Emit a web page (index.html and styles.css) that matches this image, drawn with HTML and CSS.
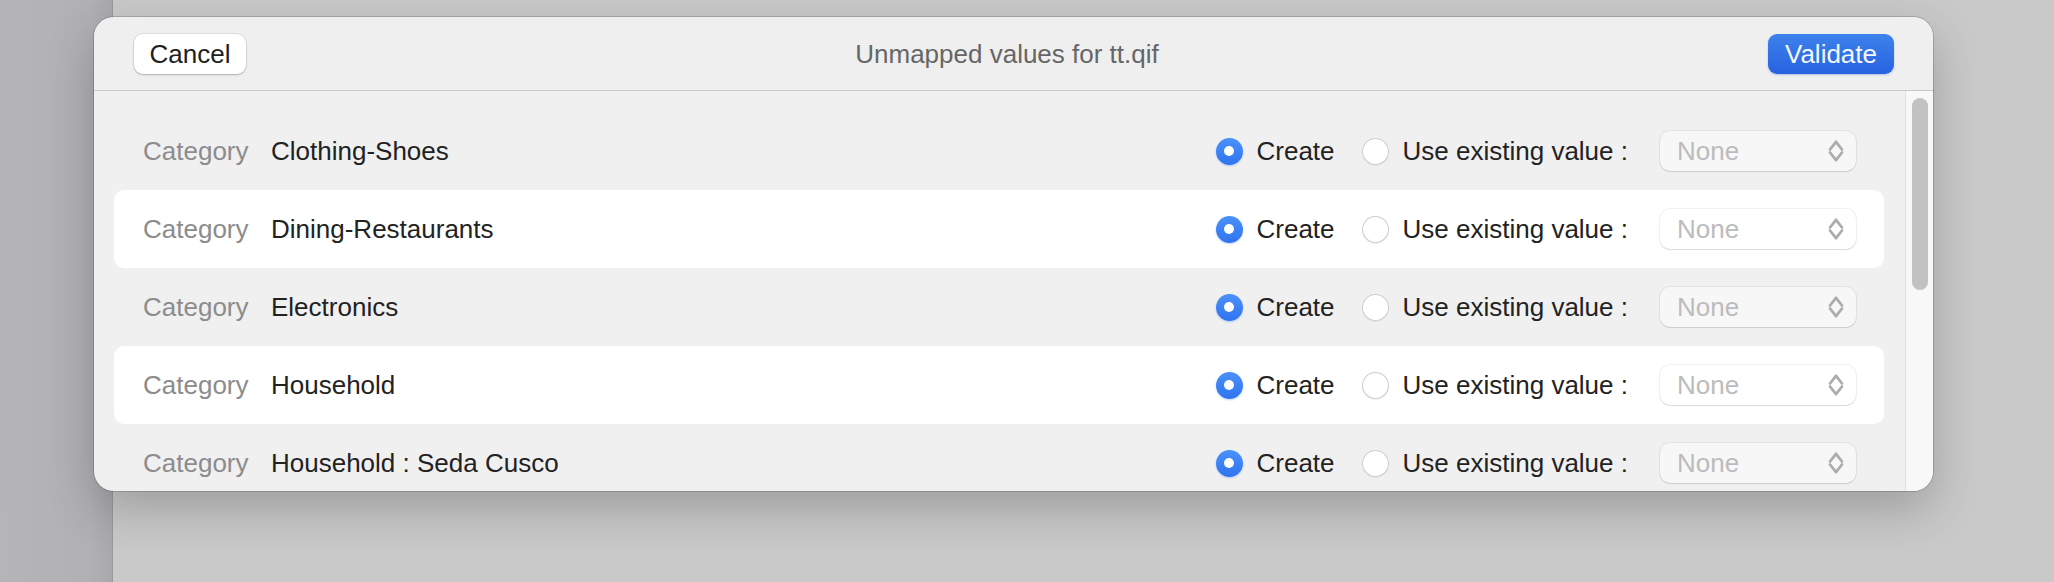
FILE: index.html
```html
<!DOCTYPE html>
<html>
<head>
<meta charset="utf-8">
<title>Unmapped values</title>
<link rel="stylesheet" href="styles.css">
</head>
<body>
<div class="sidebar"></div>
<div class="main"></div>

<div class="sheet">
  <div class="header">
    <button class="btn btn-cancel">Cancel</button>
    <div class="title">Unmapped values for tt.qif</div>
    <button class="btn btn-primary">Validate</button>
  </div>
  <div class="content">
    <div class="list">
      <div class="row">
        <span class="kind">Category</span>
        <span class="value">Clothing-Shoes</span>
        <div class="options">
          <span class="radio on"></span><span class="opt">Create</span>
          <span class="radio"></span><span class="opt last">Use existing value :</span>
          <div class="select"><span>None</span><svg width="16" height="24" viewBox="0 0 16 24"><path d="M2 10.5 L8 2.8 L14 10.5 M2 13.5 L8 21.2 L14 13.5" fill="none" stroke="#acacac" stroke-width="2.8" stroke-linecap="round" stroke-linejoin="round"/></svg></div>
        </div>
      </div>
      <div class="row alt">
        <span class="kind">Category</span>
        <span class="value">Dining-Restaurants</span>
        <div class="options">
          <span class="radio on"></span><span class="opt">Create</span>
          <span class="radio"></span><span class="opt last">Use existing value :</span>
          <div class="select"><span>None</span><svg width="16" height="24" viewBox="0 0 16 24"><path d="M2 10.5 L8 2.8 L14 10.5 M2 13.5 L8 21.2 L14 13.5" fill="none" stroke="#acacac" stroke-width="2.8" stroke-linecap="round" stroke-linejoin="round"/></svg></div>
        </div>
      </div>
      <div class="row">
        <span class="kind">Category</span>
        <span class="value">Electronics</span>
        <div class="options">
          <span class="radio on"></span><span class="opt">Create</span>
          <span class="radio"></span><span class="opt last">Use existing value :</span>
          <div class="select"><span>None</span><svg width="16" height="24" viewBox="0 0 16 24"><path d="M2 10.5 L8 2.8 L14 10.5 M2 13.5 L8 21.2 L14 13.5" fill="none" stroke="#acacac" stroke-width="2.8" stroke-linecap="round" stroke-linejoin="round"/></svg></div>
        </div>
      </div>
      <div class="row alt">
        <span class="kind">Category</span>
        <span class="value">Household</span>
        <div class="options">
          <span class="radio on"></span><span class="opt">Create</span>
          <span class="radio"></span><span class="opt last">Use existing value :</span>
          <div class="select"><span>None</span><svg width="16" height="24" viewBox="0 0 16 24"><path d="M2 10.5 L8 2.8 L14 10.5 M2 13.5 L8 21.2 L14 13.5" fill="none" stroke="#acacac" stroke-width="2.8" stroke-linecap="round" stroke-linejoin="round"/></svg></div>
        </div>
      </div>
      <div class="row">
        <span class="kind">Category</span>
        <span class="value">Household : Seda Cusco</span>
        <div class="options">
          <span class="radio on"></span><span class="opt">Create</span>
          <span class="radio"></span><span class="opt last">Use existing value :</span>
          <div class="select"><span>None</span><svg width="16" height="24" viewBox="0 0 16 24"><path d="M2 10.5 L8 2.8 L14 10.5 M2 13.5 L8 21.2 L14 13.5" fill="none" stroke="#acacac" stroke-width="2.8" stroke-linecap="round" stroke-linejoin="round"/></svg></div>
        </div>
      </div>
    </div>
    <div class="gutter"><div class="thumb"></div></div>
  </div>
</div>
</body>
</html>
```

FILE: styles.css
```css
* { box-sizing: border-box; }

html, body {
  margin: 0;
  padding: 0;
}

body {
  width: 2054px;
  height: 582px;
  display: flex;
  position: relative;
  overflow: hidden;
  font-family: "Liberation Sans", Arial, sans-serif;
  background: #c8c8c8;
}

.sidebar {
  width: 113px;
  flex: none;
  background: linear-gradient(to right, #b5b4b8 0%, #b1b0b4 80%, #a9a8ac 100%);
  border-right: 1px solid #9a9a9c;
}

.main {
  flex: 1;
  background: #c9c9c9;
}

.sheet {
  position: absolute;
  left: 94px;
  top: 17px;
  width: 1839px;
  height: 474px;
  border-radius: 20px;
  overflow: hidden;
  background: #f0f0f0;
  display: flex;
  flex-direction: column;
  box-shadow: 0 0 0 1px rgba(0, 0, 0, 0.16), 0 18px 48px rgba(0, 0, 0, 0.22);
}

.header {
  height: 74px;
  flex: none;
  display: flex;
  align-items: center;
  padding: 1px 39px 0 40px;
  border-bottom: 1px solid #c8c8c8;
  background: #efefef;
}

.btn {
  height: 40px;
  border: none;
  border-radius: 9px;
  font-family: "Liberation Sans", Arial, sans-serif;
  font-size: 26px;
  line-height: 40px;
  padding: 0;
  flex: none;
}

.btn-cancel {
  width: 112px;
  background: #ffffff;
  color: #1e1e1e;
  box-shadow: 0 0 0 1px rgba(0, 0, 0, 0.06), 0 1px 2px rgba(0, 0, 0, 0.22);
}

.btn-primary {
  width: 126px;
  background: linear-gradient(#3d82ec, #2762e0);
  color: #f4f7ff;
  box-shadow: 0 1px 2px rgba(30, 80, 200, 0.3);
}

.title {
  flex: 1;
  text-align: center;
  font-size: 26px;
  color: #666666;
}

.content {
  flex: 1;
  display: flex;
  min-height: 0;
}

.list {
  flex: 1;
  padding: 21px 21px 0 20px;
  overflow: hidden;
}

.row {
  height: 78px;
  display: flex;
  align-items: center;
  padding: 0 28px 0 29px;
  border-radius: 10px;
  font-size: 26px;
  color: #222222;
}

.row.alt {
  background: #ffffff;
}

.kind {
  width: 128px;
  flex: none;
  color: #8c8c8c;
}

.value {
  flex: 1;
}

.options {
  display: flex;
  align-items: center;
}

.radio {
  width: 27px;
  height: 27px;
  border-radius: 50%;
  flex: none;
  background: #ffffff;
  box-shadow: inset 0 0 0 1px #cdcdcd, 0 1px 1px rgba(0, 0, 0, 0.06);
  margin-right: 14px;
  display: flex;
  align-items: center;
  justify-content: center;
}

.radio.on {
  background: linear-gradient(#4b91f9, #2f74ef);
  box-shadow: 0 1px 2px rgba(40, 100, 230, 0.3);
}

.radio.on::after {
  content: "";
  width: 10px;
  height: 10px;
  border-radius: 50%;
  background: #ffffff;
}

.opt {
  margin-right: 27px;
}

.opt.last {
  margin-right: 32px;
}

.select {
  width: 196px;
  height: 40px;
  border-radius: 10px;
  background: #f7f7f7;
  box-shadow: 0 0 0 1px rgba(0, 0, 0, 0.05), 0 1px 1px rgba(0, 0, 0, 0.1);
  display: flex;
  align-items: center;
  justify-content: space-between;
  padding: 0 12px 0 17px;
  color: #bcbcbc;
}

.row.alt .select {
  background: #ffffff;
}

.select svg {
  display: block;
}

.gutter {
  width: 28px;
  flex: none;
  background: #f8f8f8;
  border-left: 1px solid #e2e2e2;
  padding: 7px 5px 0 6px;
}

.thumb {
  width: 16px;
  height: 192px;
  border-radius: 8px;
  background: #c2c2c2;
}
```
